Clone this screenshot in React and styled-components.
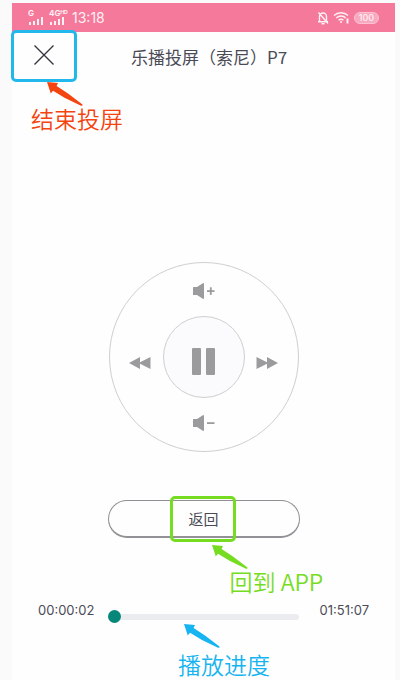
import { useState } from "react";
import styled, { createGlobalStyle } from "styled-components";

const GlobalStyle = createGlobalStyle`
    * {
        box-sizing: border-box;
    }

    body {
        margin: 0;
        background: #fafafa;
        font-family: Inter, "Noto Sans CJK SC", sans-serif;
        color: #4b4b57;
    }

    button {
        display: flex;
        align-items: center;
        justify-content: center;
        padding: 0;
        border: none;
        background: none;
        font: inherit;
        color: inherit;
    }
`;

const Page = styled.div`
    padding: 3px 5px 0 12px;
    background: #fafafa;
`;

const Screen = styled.main`
    display: flex;
    flex-direction: column;
    min-height: calc(100vh - 3px);
    background: #fefefe;
`;

const StatusBar = styled.div`
    display: flex;
    align-items: center;
    justify-content: space-between;
    height: 29px;
    padding: 0 16px;
    background: #f5799b;
    color: #fff0f4;
`;

const StatusGroup = styled.div`
    display: flex;
    align-items: center;
    gap: 4px;
`;

const Signal = styled.span`
    display: flex;
    flex-direction: column;
    width: 17px;
    font-size: 8px;
    line-height: 7px;
    font-weight: 700;
    white-space: nowrap;
`;

const Clock = styled.time`
    padding-left: 2px;
    font-size: 14px;
    line-height: 20px;
`;

const Battery = styled.span`
    padding: 0 4px;
    border: 1px solid #fbc3d2;
    border-radius: 6px;
    background: #f9a9bf;
    font-size: 9px;
    line-height: 10px;
    font-weight: 500;
`;

const Header = styled.header`
    display: grid;
    grid-template-columns: 65px 1fr 54px;
    align-items: center;
    height: 50px;
`;

const Title = styled.h1`
    margin: 0;
    font-family: "Noto Sans CJK SC", sans-serif;
    font-size: 17px;
    line-height: 24px;
    font-weight: 400;
    text-align: center;
    white-space: nowrap;
`;

const Target = styled.div`
    position: relative;
`;

const Highlight = styled.span`
    position: absolute;
    inset: ${({ $inset }) => $inset};
    border: 3px solid ${({ $color }) => $color};
    border-radius: 5px;
    pointer-events: none;
`;

const Callout = styled.div`
    position: absolute;
    top: calc(100% + ${({ $top = 0 }) => $top}px);
    left: ${({ $left }) => $left}px;
    display: flex;
    flex-direction: column;
    gap: ${({ $gap = 0 }) => $gap}px;
    color: ${({ $color }) => $color};
    font-family: "Noto Sans CJK SC", sans-serif;
    font-size: 23px;
    line-height: 22px;
    font-weight: 350;
    white-space: nowrap;
    pointer-events: none;

    svg {
        margin-left: ${({ $arrow }) => $arrow}px;
    }
`;

const CloseButton = styled.button`
    width: 100%;
    height: 50px;
    padding: 0 2px 4px 0;
    color: #34343c;
`;

const Dial = styled.div`
    display: grid;
    grid-template-columns: 1fr 82px 1fr;
    grid-template-rows: 1fr 82px 1fr;
    grid-template-areas: ". up ." "back play next" ". down .";
    align-self: center;
    width: 190px;
    height: 190px;
    margin-top: 180px;
    padding: 3px 8px;
    border: 1px solid #cfcfd1;
    border-radius: 50%;
    color: #9b9b9d;
`;

const DialButton = styled.button`
    grid-area: ${({ $area }) => $area};
`;

const SeekButton = styled(DialButton)`
    padding-top: 12px;
`;

const PlayButton = styled(DialButton)`
    padding-top: 8px;
    border: 1px solid #cfcfd1;
    border-radius: 50%;
    background: #fbfbfe;
`;

const ReturnTarget = styled(Target)`
    align-self: center;
    width: 192px;
    margin-top: 48px;
`;

const ReturnButton = styled.button`
    width: 100%;
    height: 38px;
    border: 1px solid #8f8f93;
    border-bottom: 2px solid #929296;
    border-radius: 19px;
    font-family: "Noto Sans CJK SC", sans-serif;
    font-size: 15px;
`;

const Progress = styled.div`
    display: grid;
    grid-template-columns: 70px 1fr 70px;
    align-items: start;
    margin-top: 62px;
    padding: 0 26px;
    font-size: 13px;
    line-height: 20px;
`;

const Total = styled.span`
    text-align: right;
`;

const SliderTarget = styled(Target)`
    padding-top: 10px;
`;

const Slider = styled.input`
    display: block;
    width: 100%;
    height: 14px;
    margin: 0;
    appearance: none;
    background: transparent;

    &::-webkit-slider-runnable-track {
        height: 6px;
        border-radius: 3px;
        background: #ebecf0;
    }

    &::-webkit-slider-thumb {
        appearance: none;
        width: 13px;
        height: 13px;
        margin-top: -4px;
        border-radius: 50%;
        background: #07877a;
    }
`;

function Bars() {
    return (
        <svg width="17" height="8" viewBox="0 0 17 8" fill="currentColor">
            <path d="M1 5h2v3H1zM5 4h2v4H5zM9 2h2v6H9zM13 0h2v8h-2z" />
        </svg>
    );
}

function BellOff() {
    return (
        <svg width="12" height="14" viewBox="0 0 12 14" fill="none" stroke="currentColor" strokeWidth="1.400">
            <path d="M2.500 10.500V5.500a3.500 3.500 0 0 1 7 0v5M1 10.800h10M4.500 12.800h3M1.500 1.500l9.500 11" />
        </svg>
    );
}

function Wifi() {
    return (
        <svg width="17" height="13" viewBox="0 0 17 13" fill="none" stroke="currentColor" strokeWidth="1.500">
            <path d="M1 4.500a10 10 0 0 1 14 0M3.300 7a6.800 6.800 0 0 1 9.400 0M5.600 9.300a3.600 3.600 0 0 1 4.800 0" />
            <circle cx="8" cy="11" r="1" fill="currentColor" stroke="none" />
            <path d="M14.500 7.500v5" strokeWidth="2" />
        </svg>
    );
}

function Cross() {
    return (
        <svg width="20" height="20" viewBox="0 0 20 20" stroke="currentColor" strokeWidth="1.300">
            <path d="M.5.5l19 19M19.500.5l-19 19" />
        </svg>
    );
}

function Volume({ up }) {
    return (
        <svg width="22" height="16" viewBox="0 0 22 16" fill="currentColor">
            <path d="M0 4.500Q0 4 .5 4H4l6.200-4 .8.500v15l-.8.500L4 12H.5q-.5 0-.5-.5z" />
            <path d="M14 7.200h7.500v1.800H14z" />
            {up && <path d="M16.900 4.300h1.800v7.600h-1.800z" />}
        </svg>
    );
}

function Seek({ forward }) {
    return (
        <svg width="22" height="12" viewBox="0 0 22 12" fill="currentColor">
            {forward ? (
                <path d="M.5 0L11 5.300V0l11 6-11 6V6.700L.5 12z" />
            ) : (
                <path d="M21.500 0L11 5.300V0L0 6l11 6V6.700L21.500 12z" />
            )}
        </svg>
    );
}

function PlayState({ playing }) {
    return (
        <svg width="23" height="27" viewBox="0 0 23 27" fill="currentColor">
            {playing ? (
                <>
                    <rect width="9" height="27" rx="1" />
                    <rect x="14" width="9" height="27" rx="1" />
                </>
            ) : (
                <path d="M2 0l20 13.500L2 27z" />
            )}
        </svg>
    );
}

function Arrow() {
    return (
        <svg width="37" height="25" viewBox="0 0 37 25" fill="currentColor">
            <path d="M0 0L11 1 9.600 4 21 11.500 35.500 22.500q.5 1.500-1.500 1.200L18 16 6 8.800 3.800 11.500z" />
        </svg>
    );
}

function formatTime(s) {
    return [s / 3600, (s / 60) % 60, s % 60]
        .map(n => String(Math.floor(n)).padStart(2, "0"))
        .join(":");
}

const DURATION = 6667;

export default function App() {
    const [playing, setPlaying] = useState(true);
    const [position, setPosition] = useState(2);

    const seek = step => setPosition(p => Math.min(DURATION, Math.max(0, p + step)));

    return (
        <Page>
            <GlobalStyle />
            <Screen>
                <StatusBar>
                    <StatusGroup>
                        <Signal>G<Bars /></Signal>
                        <Signal>4Gᴴᴰ<Bars /></Signal>
                        <Clock>13:18</Clock>
                    </StatusGroup>
                    <StatusGroup>
                        <BellOff />
                        <Wifi />
                        <Battery>100</Battery>
                    </StatusGroup>
                </StatusBar>

                <Header>
                    <Target>
                        <CloseButton aria-label="结束投屏">
                            <Cross />
                        </CloseButton>
                        <Highlight $color="#22b8ec" $inset="-2px 0 0 -1px" />
                        <Callout $color="#f4440f" $left={19} $arrow={16}>
                            <Arrow />
                            结束投屏
                        </Callout>
                    </Target>
                    <Title>乐播投屏（索尼）P7</Title>
                </Header>

                <Dial>
                    <DialButton $area="up" aria-label="音量+">
                        <Volume up />
                    </DialButton>
                    <SeekButton $area="back" aria-label="快退" onClick={() => seek(-15)}>
                        <Seek />
                    </SeekButton>
                    <PlayButton $area="play" aria-label="暂停" onClick={() => setPlaying(!playing)}>
                        <PlayState playing={playing} />
                    </PlayButton>
                    <SeekButton $area="next" aria-label="快进" onClick={() => seek(15)}>
                        <Seek forward />
                    </SeekButton>
                    <DialButton $area="down" aria-label="音量-">
                        <Volume />
                    </DialButton>
                </Dial>

                <ReturnTarget>
                    <ReturnButton>返回</ReturnButton>
                    <Highlight $color="#76dc22" $inset="-4px 64px -4px 62px" />
                    <Callout $color="#76dc22" $top={7} $left={122} $arrow={-18}>
                        <Arrow />
                        回到 APP
                    </Callout>
                </ReturnTarget>

                <Progress>
                    <span>{formatTime(position)}</span>
                    <SliderTarget>
                        <Slider
                            type="range"
                            aria-label="播放进度"
                            min="0"
                            max={DURATION}
                            value={position}
                            onChange={e => setPosition(Number(e.target.value))}
                        />
                        <Callout $color="#16b4f0" $left={70} $arrow={6} $gap={4}>
                            <Arrow />
                            播放进度
                        </Callout>
                    </SliderTarget>
                    <Total>{formatTime(DURATION)}</Total>
                </Progress>
            </Screen>
        </Page>
    );
}
